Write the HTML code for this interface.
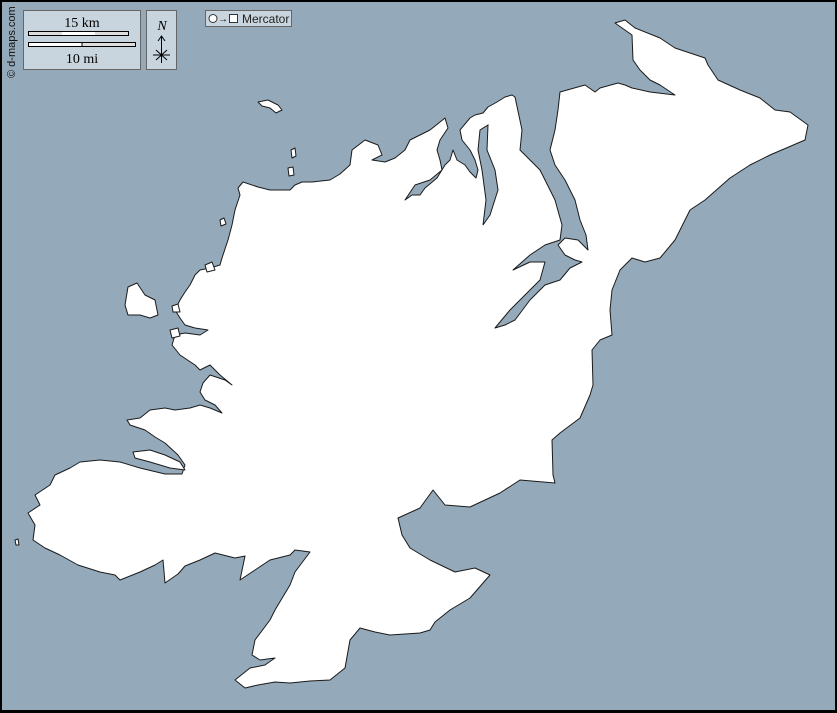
<!DOCTYPE html>
<html><head><meta charset="utf-8"><style>
html,body{margin:0;padding:0;}
body{width:837px;height:713px;overflow:hidden;background:#000;}
svg{display:block;}
text{font-family:"Liberation Serif",serif;}
</style></head><body>
<svg width="837" height="713" viewBox="0 0 837 713" xmlns="http://www.w3.org/2000/svg">
<rect x="0" y="0" width="837" height="713" fill="#000"/>
<rect x="2" y="2" width="833" height="708" fill="#94aabb"/>
<g fill="#fff" stroke="#1a1a1a" stroke-width="1" stroke-linejoin="round">
<path d="M238,188 L243,182 L258,187 L270,190 L290,190 L295,185 L302,182 L312,182 L330,180 L340,174 L350,165 L352,150 L365,140 L378,145 L382,155 L372,160 L385,162 L395,158 L405,150 L410,140 L420,135 L430,130 L440,122 L445,118 L448,128 L440,140 L437,150 L440,160 L442,170 L430,180 L415,185 L405,200 L412,195 L420,195 L425,188 L437,178 L445,165 L450,160 L453,150 L457,160 L465,165 L470,172 L476,178 L478,170 L475,160 L470,150 L462,140 L460,130 L470,118 L475,115 L483,113 L488,107 L497,102 L505,97 L512,95 L515,97
L522,130 L520,150 L540,170 L555,200 L562,225 L560,240 L545,245 L530,255 L513,270 L530,262 L545,262 L540,280 L525,295 L510,310 L495,328 L505,325 L515,320 L530,300 L545,285 L560,280 L570,268 L582,262 L575,260 L565,255 L558,245 L565,238 L578,240 L588,250 L586,235 L580,220 L575,200 L565,180 L555,165 L550,150 L555,130 L558,110 L560,92 L585,85 L595,92 L600,88 L618,83 L625,85 L632,88 L650,92 L675,95 L660,85 L650,80 L640,70 L633,60 L632,35 L615,23 L625,20 L635,28 L660,38 L675,48 L705,58 L708,65 L718,80 L740,90 L760,98 L775,110 L790,112 L808,125 L805,140 L770,155 L750,165 L730,178 L705,200 L690,210 L675,240 L660,258 L645,262 L632,258 L620,270 L612,290 L610,310 L612,335 L600,340 L592,350 L593,385 L590,395 L580,418 L560,433 L552,440 L553,475 L555,483
L520,480 L500,493 L470,507 L445,505 L433,490 L420,508 L398,518 L402,535 L410,548 L430,560 L455,572 L475,568 L490,575 L470,598 L450,610 L435,622 L430,630 L420,633 L390,635 L375,632 L360,628 L350,640 L345,668 L330,680 L310,681 L290,683 L275,682 L258,685 L245,688 L235,680 L250,668 L265,665 L275,658 L260,660 L252,655 L255,640 L270,620 L275,610 L290,585 L295,572 L310,552 L295,550 L290,555 L270,560 L255,570 L240,580 L245,556 L235,558 L215,553 L200,560 L185,566 L178,574 L165,583 L163,560 L155,565 L140,572 L120,580 L115,575 L100,572 L78,565 L60,555 L45,548 L33,540 L35,525 L28,513 L40,505 L35,495 L50,485 L55,475 L70,468 L80,462 L100,460 L120,462 L140,468 L165,474 L182,474 L185,465 L178,455 L165,443 L155,437 L145,430 L130,425 L127,420 L140,418 L150,410 L165,408 L175,410 L190,408 L200,405 L210,408 L222,413 L215,405 L205,400 L200,392 L203,383 L210,375 L225,380 L232,385 L220,375 L210,365 L200,370 L195,365 L180,355 L172,345 L175,335 L185,333 L200,335 L208,330 L195,328 L185,325 L180,318 L175,310 L180,300 L185,292 L190,285 L195,275 L200,270 L210,268 L220,265 L222,258 L228,240 L232,225 L235,210 L240,195 Z"/>
<path d="M133,452 L150,450 L165,455 L180,462 L185,470 L170,468 L150,462 L135,458 Z"/>
<path d="M128,287 L137,283 L145,295 L155,300 L158,315 L150,318 L140,315 L128,315 L125,305 Z"/>
<path d="M258,102 L268,100 L278,105 L282,110 L276,113 L270,108 L262,106 Z"/>
<path d="M205,265 L212,262 L215,270 L207,272 Z"/>
<path d="M170,330 L178,328 L180,336 L172,338 Z"/>
<path d="M172,306 L178,304 L180,312 L173,312 Z"/>
<path d="M220,220 L224,218 L226,224 L221,226 Z"/>
<path d="M291,150 L295,148 L296,156 L292,158 Z"/>
<path d="M288,168 L293,167 L294,175 L289,176 Z"/>
<path d="M15,540 L18,539 L19,545 L16,545 Z"/>
</g>
<path d="M480,130 L488,125 L487,150 L495,170 L498,190 L490,215 L483,225 L486,200 L482,170 L478,150 Z" fill="#94aabb" stroke="#1a1a1a" stroke-width="1"/>
<!-- legend -->
<rect x="23.5" y="10.5" width="117" height="59" fill="#c8d5de" stroke="#666"/>
<text x="82" y="27" font-size="14" text-anchor="middle">15 km</text>
<rect x="28.5" y="31.5" width="100" height="4" fill="#ddd" stroke="#000"/>
<rect x="62" y="32" width="33" height="3" fill="#fff"/>
<rect x="28.5" y="42.5" width="107" height="4" fill="#ddd" stroke="#000"/>
<rect x="29" y="43" width="53" height="3" fill="#fff"/>
<line x1="82" y1="42" x2="82" y2="47" stroke="#000"/>
<text x="82" y="63" font-size="14" text-anchor="middle">10 mi</text>
<rect x="146.5" y="10.5" width="30" height="59" fill="#c8d5de" stroke="#666"/>
<text x="162" y="30" font-size="14" font-style="italic" text-anchor="middle">N</text>
<g stroke="#000" stroke-width="1" fill="none">
<line x1="161.5" y1="36" x2="161.5" y2="63"/>
<path d="M158,41 L161.5,36 L165,41"/>
<line x1="153" y1="55" x2="170" y2="55"/>
<line x1="156" y1="50" x2="167" y2="60"/>
<line x1="167" y1="50" x2="156" y2="60"/>
</g>
<rect x="205.5" y="10.5" width="86" height="16" fill="#c8d5de" stroke="#666"/>
<circle cx="213" cy="18.5" r="4" fill="#fff" stroke="#333"/>
<text x="218" y="22" font-size="10" font-family="Liberation Sans,sans-serif">→</text>
<rect x="229.5" y="14.5" width="8" height="8" fill="#fff" stroke="#333"/>
<text x="242" y="23" font-size="12" fill="#222" style="font-family:'Liberation Sans',sans-serif">Mercator</text>
<text transform="translate(15,78) rotate(-90)" font-size="11" fill="#111" style="font-family:'Liberation Sans',sans-serif">© d-maps.com</text>
</svg>
</body></html>
